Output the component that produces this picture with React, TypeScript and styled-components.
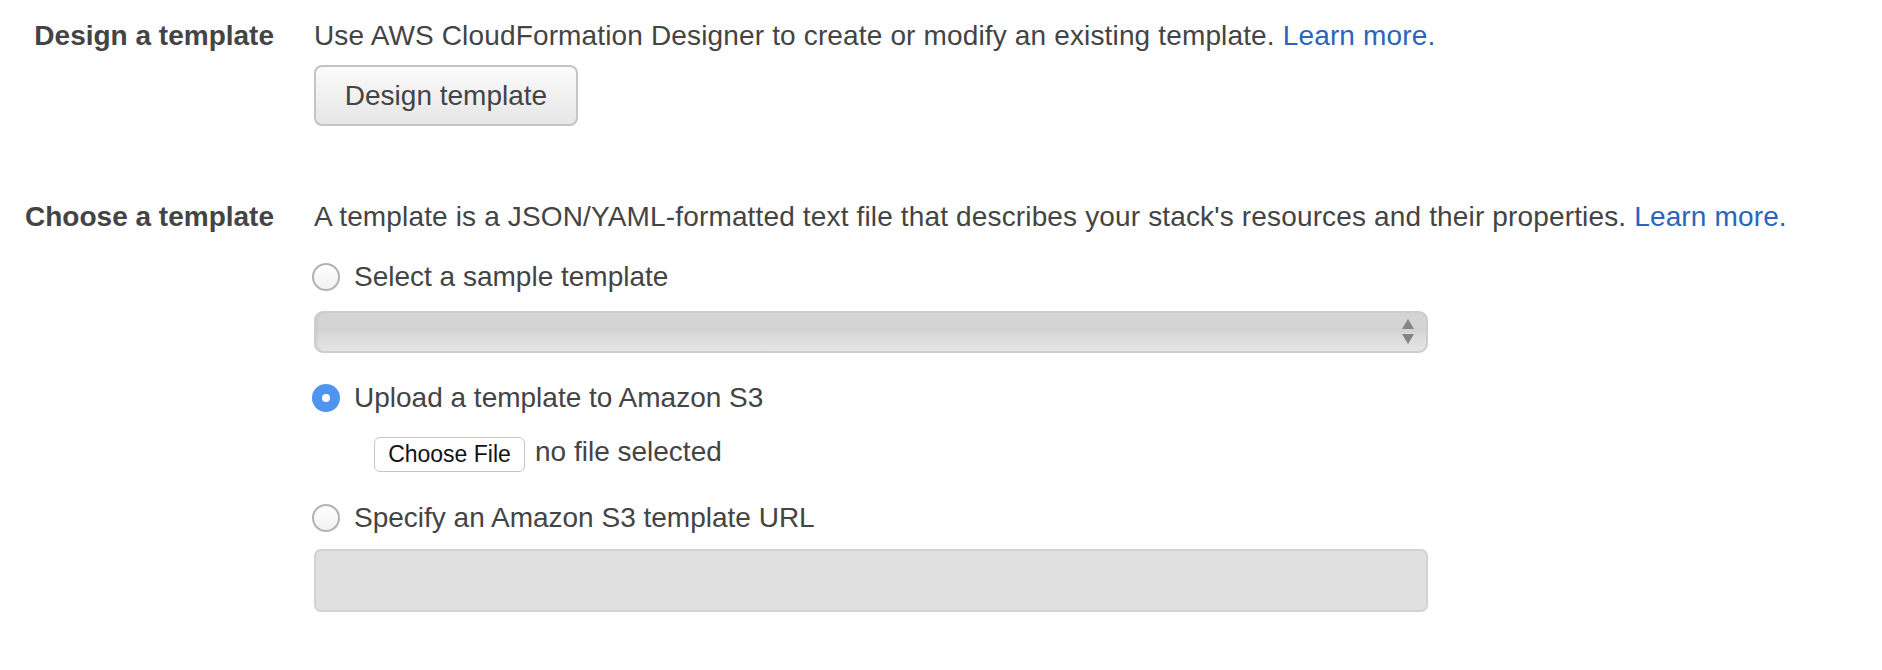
import React from "react";
import styled, { createGlobalStyle } from "styled-components";

const GlobalStyle = createGlobalStyle`
	body {
		margin: 0;
		background-color: #ffffff;
		font-family: "Liberation Sans", Arial, sans-serif;
		color: #444444;
	}
`;

const options = [
	{ id: "sample", label: "Select a sample template", checked: false },
	{ id: "upload", label: "Upload a template to Amazon S3", checked: true },
	{ id: "url", label: "Specify an Amazon S3 template URL", checked: false },
];

const App = () => {
	return (
		<>
			<GlobalStyle />
			<Container>
				<Section>
					<Label>Design a template</Label>
					<Content>
						<Desc>
							Use AWS CloudFormation Designer to create or modify an existing
							template. <Link href='#'>Learn more.</Link>
						</Desc>
						<Button>Design template</Button>
					</Content>
				</Section>

				<Section mt='71px'>
					<Label>Choose a template</Label>
					<Content>
						<Desc>
							A template is a JSON/YAML-formatted text file that describes your
							stack's resources and their properties.{" "}
							<Link href='#'>Learn more.</Link>
						</Desc>

						<RadioRow mt='20px'>
							<Radio checked={options[0].checked} />
							<span>{options[0].label}</span>
						</RadioRow>
						<Select>
							<Arrows>
								<svg width='14' height='28' viewBox='0 0 14 28'>
									<path d='M7 1 L13 11 L1 11 Z' fill='#858585' />
									<path d='M1 16 L13 16 L7 26 Z' fill='#858585' />
								</svg>
							</Arrows>
						</Select>

						<RadioRow mt='25px'>
							<Radio checked={options[1].checked} />
							<span>{options[1].label}</span>
						</RadioRow>
						<FileRow>
							<FileButton>Choose File</FileButton>
							<FileStatus>no file selected</FileStatus>
						</FileRow>

						<RadioRow mt='26px'>
							<Radio checked={options[2].checked} />
							<span>{options[2].label}</span>
						</RadioRow>
						<UrlInput />
					</Content>
				</Section>
			</Container>
		</>
	);
};

export default App;

const Container = styled.div`
	padding-top: 16px;
	padding-bottom: 59px;
	width: 1882px;
	font-size: 28px;
	line-height: 40px;
`;

const Section = styled.div<{ mt?: string }>`
	display: grid;
	grid-template-columns: 274px 1114px;
	column-gap: 40px;
	margin-top: ${(props) => props.mt || "0px"};
`;

const Label = styled.div`
	font-weight: bold;
	text-align: right;
	color: #444444;
	white-space: nowrap;
`;

const Content = styled.div`
	display: flex;
	flex-direction: column;
	align-items: flex-start;
`;

const Desc = styled.div`
	white-space: nowrap;
	letter-spacing: 0.15px;
`;

const Link = styled.a`
	color: #2a64bd;
	text-decoration: none;
`;

const Button = styled.button`
	margin-top: 9px;
	height: 61px;
	width: 264px;
	border: 2px solid #c4c4c4;
	border-radius: 8px;
	background: linear-gradient(#fbfbfb, #e6e6e6);
	font-family: "Liberation Sans", Arial, sans-serif;
	font-size: 28px;
	color: #444444;
	padding: 0;
	cursor: pointer;
`;

const RadioRow = styled.label<{ mt: string }>`
	display: flex;
	align-items: center;
	gap: 14px;
	margin-top: ${(props) => props.mt};
	margin-left: -2px;
	height: 40px;
	cursor: pointer;
`;

const Radio = styled.span<{ checked: boolean }>`
	box-sizing: border-box;
	width: 28px;
	height: 28px;
	border-radius: 50%;
	flex-shrink: 0;
	position: relative;
	border: ${(props) => (props.checked ? "none" : "2px solid #b2b2b2")};
	background: ${(props) =>
		props.checked ? "#4f95ee" : "linear-gradient(#ffffff, #f2f2f2)"};

	&::after {
		content: "";
		display: ${(props) => (props.checked ? "block" : "none")};
		position: absolute;
		left: 10px;
		top: 10px;
		width: 8px;
		height: 8px;
		border-radius: 50%;
		background: #ffffff;
	}
`;

const Select = styled.div`
	box-sizing: border-box;
	margin-top: 14px;
	width: 1114px;
	height: 42px;
	border: 2px solid #cdcdcd;
	border-radius: 9px;
	background: linear-gradient(
		#d5d5d5 0%,
		#d3d3d3 48%,
		#d9d9d9 52%,
		#e4e4e4 100%
	);
	box-shadow: inset 3px 0 3px -2px rgba(0, 0, 0, 0.08);
	display: flex;
	align-items: center;
	justify-content: flex-end;
	padding-right: 11px;
`;

const Arrows = styled.div`
	display: flex;
	align-items: center;
`;

const FileRow = styled.div`
	display: flex;
	align-items: center;
	gap: 10px;
	margin-top: 19px;
	margin-left: 60px;
	height: 35px;
`;

const FileStatus = styled.span`
	margin-top: -6px;
`;

const FileButton = styled.button`
	box-sizing: border-box;
	height: 35px;
	width: 151px;
	padding: 0;
	border: 1.5px solid #c6c6c6;
	border-radius: 6px;
	background: #ffffff;
	font-family: "Liberation Sans", Arial, sans-serif;
	font-size: 23px;
	color: #111111;
`;

const UrlInput = styled.div`
	box-sizing: border-box;
	margin-top: 11px;
	width: 1114px;
	height: 63px;
	border: 2px solid #d2d2d2;
	border-radius: 7px;
	background: #e0e0e0;
`;
